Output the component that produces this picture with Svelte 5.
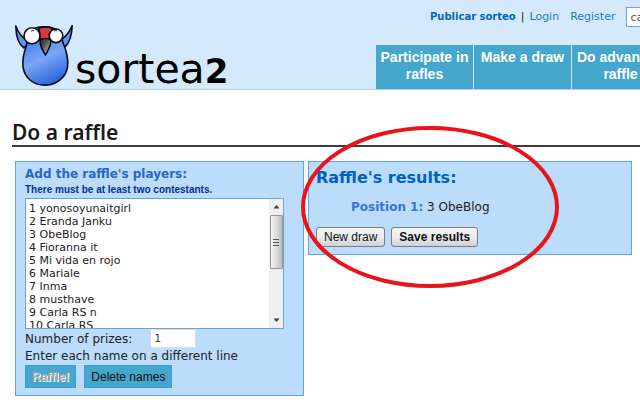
<script>
	let names = [
		'1 yonosoyunaitgirl',
		'2 Eranda Janku',
		'3 ObeBlog',
		'4 Fioranna it',
		'5 Mi vida en rojo',
		'6 Mariale',
		'7 Inma',
		'8 musthave',
		'9 Carla RS n',
		'10 Carla RS'
	].join('\n');
	let prizes = 1;
	let search = 'ca';
	const tabs = ['Participate in rafles', 'Make a draw', 'Do advanced raffle'];
</script>

<div class="page">
	<header>
		<a class="logo" href="#home" aria-label="sortea2">
			<svg width="60" height="63" viewBox="0 0 60 63" aria-hidden="true">
				<defs>
					<linearGradient id="body" x1="0.3" y1="0.2" x2="0.6" y2="1">
						<stop offset="0" stop-color="#4585ee" />
						<stop offset="0.45" stop-color="#7aa6f6" />
						<stop offset="1" stop-color="#2a62dc" />
					</linearGradient>
					<linearGradient id="beak" x1="0" y1="0" x2="1" y2="1">
						<stop offset="0" stop-color="#222" />
						<stop offset="0.4" stop-color="#555" />
						<stop offset="1" stop-color="#ddd" />
					</linearGradient>
					<linearGradient id="crest" x1="0" y1="0" x2="0" y2="1">
						<stop offset="0" stop-color="#c04048" />
						<stop offset="1" stop-color="#ec2c3c" />
					</linearGradient>
				</defs>
				<g stroke="#080c18" stroke-width="1.6" stroke-linejoin="round">
					<path d="M.8 1 C1 11 3 19 9 23 L14 17 C7 13 3 7 .8 1Z" fill="#5f95f2" />
					<path d="M57.200 .5 C54 8 51 11 45 16 L50 22 C55 17 57 9 57.200 .5Z" fill="#5f95f2" />
					<path d="M18 4 C24 .8 36 .8 42 5 C47 10 47 17 50 23 C55 38 53 48 46 54 C38 62 23 62 15 55 C7 48 6 36 11 22 C13 15 13 8 18 4Z" fill="url(#body)" />
					<path d="M24 3 Q31 .8 37 3 L36 14 H25Z" fill="url(#crest)" />
					<path d="M25 15 Q31 12 36 15 C36 21 33 25 30.500 30 C27 25 25 21 25 15Z" fill="url(#beak)" />
					<circle cx="17" cy="10.800" r="8" fill="#fff" />
					<circle cx="41" cy="10.800" r="6.800" fill="#fff" />
				</g>
				<path d="M16 6 q2 -1 3 0 M39 6 q2 -1 3 0" fill="none" stroke="#333" stroke-width="1.2" />
			</svg>
			<span class="brand">sortea<b>2</b></span>
		</a>
		<div class="top">
			<div class="account">
				<a class="publish" href="#publish">Publicar sorteo</a>
				<span class="bar">|</span>
				<a href="#login">Login</a>
				<a class="register" href="#register">Register</a>
				<input class="search" type="text" aria-label="Search" bind:value={search} />
			</div>
			<nav>
				{#each tabs as tab}
					<a href="#{tab}">{tab}</a>
				{/each}
			</nav>
		</div>
	</header>

	<main>
		<h1>Do a raffle</h1>
		<div class="columns">
			<form class="panel players" on:submit|preventDefault>
				<label class="title" for="names">Add the raffle's players:</label>
				<strong class="note">There must be at least two contestants.</strong>
				<div class="list">
					<textarea id="names" spellcheck="false" bind:value={names}></textarea>
					<div class="track" aria-hidden="true">
						<svg width="9" height="5" viewBox="0 0 9 5"><path d="M1.500 4.500 L4.500 1 L7.500 4.500Z" fill="#444" /></svg>
						<div class="thumb">
							<svg width="7" height="7" viewBox="0 0 7 7"><path d="M0 .5H6M0 3.500H6M0 6.500H6" stroke="#555" /></svg>
						</div>
						<svg width="9" height="5" viewBox="0 0 9 5"><path d="M1.500 .5 L4.500 4 L7.500 .5Z" fill="#444" /></svg>
					</div>
				</div>
				<div class="prizes">
					<label for="prizes">Number of prizes:</label>
					<input id="prizes" type="text" bind:value={prizes} />
				</div>
				<p>Enter each name on a different line</p>
				<div class="actions">
					<button class="flat raffle" type="submit">Raffle!</button>
					<button class="flat" type="button">Delete names</button>
				</div>
			</form>

			<section class="panel results">
				<h2>Raffle's results:</h2>
				<p class="position"><b>Position 1:</b> 3 ObeBlog</p>
				<div class="buttons">
					<button type="button">New draw</button>
					<button class="save" type="button">Save results</button>
				</div>
			</section>
		</div>
	</main>

	<svg class="mark" width="262" height="166" viewBox="0 0 262 166" aria-hidden="true">
		<ellipse cx="131" cy="83" rx="127" ry="79" fill="none" stroke="#e8141c" stroke-width="4" />
	</svg>
</div>

<style>
	:global(body) {
		margin: 0;
		background: #fff;
	}
	.page {
		position: relative;
		overflow: hidden;
		font-family: Verdana, 'DejaVu Sans', sans-serif;
		font-size: 12px;
		color: #222;
	}
	a {
		text-decoration: none;
		color: #1c7cc0;
	}
	button,
	input,
	textarea {
		box-sizing: border-box;
		margin: 0;
		font-family: inherit;
	}
	header {
		display: flex;
		height: 89px;
		background: #d5e9fd;
		border-bottom: 1px solid #a9d5ee;
	}
	.logo {
		display: flex;
		flex: none;
		align-items: flex-end;
		box-sizing: border-box;
		width: 376px;
		padding-left: 15px;
		color: #000;
	}
	.logo svg {
		flex: none;
		margin-bottom: 1px;
	}
	.brand {
		font-size: 41px;
		line-height: 36px;
	}
	.brand b {
		font-size: 34px;
	}
	.top {
		display: flex;
		flex: none;
		flex-direction: column;
		justify-content: space-between;
	}
	.account {
		display: flex;
		align-items: center;
		padding: 7px 0 0 54px;
		font-size: 11px;
		line-height: 20px;
	}
	.publish {
		font-size: 10px;
		font-weight: bold;
		color: #0068b8;
	}
	.bar {
		margin: 0 5px;
	}
	.register {
		margin: 0 11px;
	}
	.search {
		width: 120px;
		height: 20px;
		padding: 0 3px;
		border: 1px solid #6aa5de;
		background: #fff;
		font-size: 11px;
		color: #555;
	}
	nav {
		display: flex;
		gap: 1px;
	}
	nav a {
		box-sizing: border-box;
		width: 97px;
		height: 44px;
		padding: 4px 2px;
		background: #45a7cb;
		color: #fff;
		font: bold 14px/17px Arial, 'Liberation Sans', sans-serif;
		text-align: center;
	}
	main {
		padding: 29px 0 11px 12px;
	}
	h1 {
		margin: 0;
		border-bottom: 2px solid #3b3b3f;
		font: 600 21px/26px 'Trebuchet MS', 'Noto Sans', sans-serif;
		color: #1b1b1b;
	}
	.columns {
		display: flex;
		align-items: flex-start;
		gap: 4px;
		padding: 14px 8px 0 3px;
	}
	.panel {
		box-sizing: border-box;
		border: 1px solid #64a4dc;
		background: #bbdcfb;
	}
	.players {
		display: flex;
		flex: none;
		flex-direction: column;
		width: 289px;
		padding: 4px 9px 7px;
	}
	.title {
		font-size: 12px;
		font-weight: bold;
		line-height: 16px;
		color: #2a66c4;
	}
	.note {
		font: bold 10px/16px Arial, 'Liberation Sans', sans-serif;
		color: #063193;
	}
	.list {
		display: flex;
		box-sizing: border-box;
		width: 259px;
		height: 131px;
		border: 1px solid #64a4e4;
		background: #fff;
	}
	textarea {
		flex: 1;
		padding: 3px;
		border: 0;
		background: none;
		font-size: 11px;
		line-height: 13px;
		color: #222;
		resize: none;
		outline: none;
		scrollbar-width: none;
	}
	.track {
		display: flex;
		flex-direction: column;
		align-items: center;
		box-sizing: border-box;
		width: 14px;
		padding: 5px 0;
		background: #f0f0f0;
	}
	.thumb {
		display: grid;
		place-items: center;
		box-sizing: border-box;
		width: 13px;
		height: 54px;
		margin: 6px 0 auto;
		border: 1px solid #979797;
		border-radius: 1px;
		background: linear-gradient(90deg, #f4f4f4, #dcdcdc 50%, #bdbdc0);
	}
	.prizes {
		display: flex;
		align-items: center;
		gap: 18px;
	}
	.prizes input {
		width: 46px;
		height: 19px;
		padding: 0 3px;
		border: 1px solid #ddd;
		background: #fff;
		font-size: 11px;
		color: #444;
	}
	p {
		margin: 0;
		line-height: 17px;
	}
	.actions {
		display: flex;
		gap: 8px;
	}
	.flat {
		height: 23px;
		padding: 0 6px;
		border: 1px solid #3b97e8;
		background: #45a7cb;
		font: 12px Arial, 'Liberation Sans', sans-serif;
		color: #111;
	}
	.raffle {
		font-weight: bold;
		color: #a8a8a8;
		text-shadow: 1px 1px 0 #fff;
	}
	.results {
		flex: 1;
		padding: 6px 7px 7px;
	}
	h2 {
		margin: 0;
		font-size: 16px;
		line-height: 20px;
		color: #0062c0;
	}
	.position {
		padding: 11px 0 11px 35px;
	}
	.position b {
		color: #3d72cf;
	}
	.buttons {
		display: flex;
		gap: 6px;
	}
	.buttons button {
		height: 20px;
		padding: 0 7px;
		border: 1px solid #7c7c7c;
		border-radius: 3px;
		background: linear-gradient(#f4f4f4, #ebebeb 50%, #d2d2d2);
		font: 12px Arial, 'Liberation Sans', sans-serif;
		color: #111;
	}
	.buttons .save {
		font-weight: bold;
	}
	/* hand-drawn ring around the result */
	.mark {
		position: absolute;
		top: 124px;
		left: 299px;
		pointer-events: none;
	}
</style>
